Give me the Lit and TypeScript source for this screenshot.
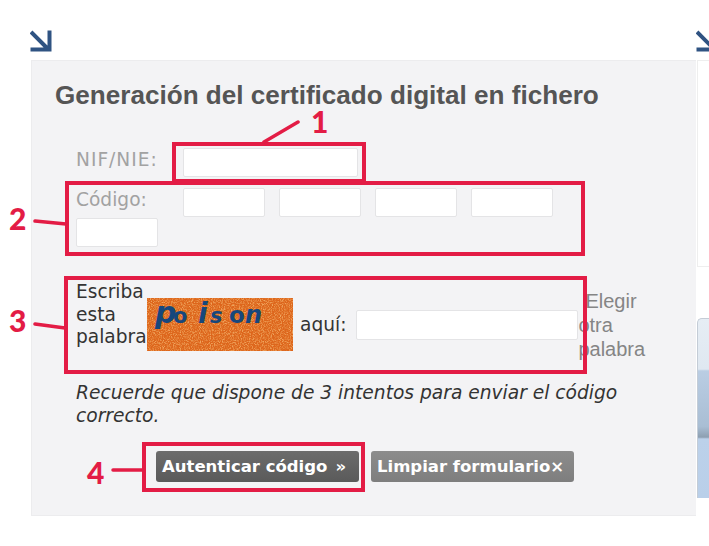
import { LitElement, html, css, svg } from "lit";
import { customElement } from "lit/decorators.js";

const arrow = html`<svg class="arrow" width="22" height="22" viewBox="0 0 22 22"><path d="M1 2 L19 20 M0.5 19.5 H19.5 V0.5" fill="none" stroke="#2f5382" stroke-width="4"/></svg>`;

@customElement("app-root")
export class AppRoot extends LitElement {
  static styles = css`
    :host { display: block; width: 709px; height: 546px; overflow: hidden; position: relative; background: #fff; font-family: "DejaVu Sans", Verdana, sans-serif; }
    .page { display: flex; padding: 30px 0 0 30px; }
    .col { flex: 0 0 666px; }
    .arrow { display: block; margin-bottom: 8px; }
    .panel { margin-left: 1px; width: 665px; height: 456px; box-sizing: border-box; background: #f3f3f5; padding: 20px 0 0 23px; border-top: 1px solid #ececee; border-bottom: 1px solid #ececee; border-left: 1px solid #ececee; }
    h2 { margin: 0 0 39px; font: bold 26.1px/28px "Liberation Sans", Arial, sans-serif; color: #555; white-space: nowrap; }
    .form { margin-left: 21px; }
    .row { display: flex; align-items: flex-start; }
    .lbl { flex: 0 0 107px; font-size: 18.6px; line-height: 24px; color: #a2a2a2; }
    .wide { letter-spacing: 1px; }
    input { box-sizing: border-box; height: 29px; background: #fff; border: 1px solid #e4e4e6; border-radius: 2px; padding: 0; margin: 0; display: block; }
    .nif { width: 175px; }
    .code { flex-wrap: wrap; width: 500px; margin-top: 11px; row-gap: 1px; }
    .code input { width: 82px; margin-right: 14px; }
    .cap { margin-top: 35px; color: #333; }
    .write { flex: 0 0 71px; font-size: 18.6px; line-height: 22.5px; margin-top: -1px; }
    .capimg { display: block; flex: none; margin-top: 16px; }
    .aqui { font-size: 18.6px; line-height: 24px; margin: 31px 10px 0 7px; }
    .word { flex: none; width: 222px; height: 30px; margin-top: 28px; }
    .other { flex: 0 0 72px; font: 20px/24px "Liberation Sans", Arial, sans-serif; color: #858585; margin-top: 7px; text-indent: 7px; }
    .note { margin: 20px 0 0; font-size: 18.65px; line-height: 23px; font-style: italic; color: #333; width: 570px; }
    .btns { display: flex; gap: 12px; margin: 24px 0 0 80px; }
    button { width: 203px; height: 31px; border: 0; padding: 0 0 0 6px; text-align: left; border-radius: 3px; color: #fff; font: bold 16.5px "DejaVu Sans", Verdana, sans-serif; white-space: nowrap; overflow: hidden; }
    .mark { margin-left: 8px; }
    .go { background: linear-gradient(#6c6c6c, #5a5a5a); }
    .clear { background: linear-gradient(#8c8c8c, #7e7e7e); }
    .side { margin-left: 1px; height: 456px; box-sizing: border-box; background: #fff; border-top: 1px solid #eee; }
    .sideTop { height: 205px; border-left: 1px solid #eee; border-bottom: 1px solid #eee; }
    .photo { margin-top: 51px; height: 180px; box-sizing: border-box; border-left: 1px solid #c4ccd6; border-top: 1px solid #c4ccd6; border-top-left-radius: 5px; background: linear-gradient(#e6edf4 0, #dfe8f1 28%, #bacde3 29%, #a9bed4 60%, #8d9fb1 66%, #bcd1ea 67%, #b9cfe9 100%); }
    .marks { position: absolute; inset: 0; pointer-events: none; }
    .marks text { font: 900 30px Lato, sans-serif; fill: #e31c45; }
  `;

  private captcha() {
    return html`<svg class="capimg" width="146" height="53" viewBox="0 0 146 53">
      <defs><filter id="n" x="0" y="0" width="100%" height="100%">
        <feTurbulence type="fractalNoise" baseFrequency="0.9" numOctaves="2" seed="4" result="t"/>
        <feColorMatrix in="t" type="matrix" values="0 0 0 0 0.98  0 0 0 0 0.62  0 0 0 0 0.25  3 0 0 0 -1.3"/>
      </filter></defs>
      <rect width="146" height="53" fill="#dd661c"/>
      <rect width="146" height="53" filter="url(#n)" opacity=".6"/>
      <g fill="#17477c" font-family="'DejaVu Sans',sans-serif" font-weight="bold">
        <text x="8" y="25" font-size="30" font-style="italic">p</text>
        <text x="26" y="25" font-size="21">o</text>
        <text x="51" y="25" font-size="28" font-style="italic">i</text>
        <text x="63" y="25" font-size="21" font-style="italic">s</text>
        <text x="82" y="25" font-size="23">o</text>
        <text x="98" y="25" font-size="24" font-style="italic">n</text>
      </g>
    </svg>`;
  }

  render() {
    return html`
      <div class="page">
        <div class="col">
          ${arrow}
          <section class="panel">
            <h2>Generación del certificado digital en fichero</h2>
            <div class="form">
              <div class="row"><span class="lbl wide">NIF/NIE:</span><input class="nif" /></div>
              <div class="row code">
                <span class="lbl">Código:</span>
                <input /><input /><input /><input /><input />
              </div>
              <div class="row cap">
                <div class="write">Escriba esta palabra</div>
                ${this.captcha()}
                <span class="aqui">aquí:</span>
                <input class="word" />
                <span class="other">Elegir otra palabra</span>
              </div>
              <p class="note">Recuerde que dispone de 3 intentos para enviar el código correcto.</p>
              <div class="btns">
                <button class="go">Autenticar código<span class="mark">»</span></button>
                <button class="clear">Limpiar formulario×</button>
              </div>
            </div>
          </section>
        </div>
        <div class="col">
          ${arrow}
          <div class="side"><div class="sideTop"></div><div class="photo"></div></div>
        </div>
      </div>
      <svg class="marks" width="709" height="546" viewBox="0 0 709 546">
        ${svg`<g fill="none" stroke="#e31c45" stroke-width="4">
          <rect x="174" y="144" width="190" height="37"/>
          <rect x="67" y="183" width="516" height="71"/>
          <rect x="66" y="278" width="519" height="94"/>
          <rect x="144" y="444" width="219" height="46"/>
          <path stroke-width="3.5" stroke-linecap="round" d="M264 142 L298 122 M35 221 L66 224 M35 324 L65 328 M113 470 H142"/>
        </g>
        <text x="311" y="133">1</text>
        <text x="9" y="230">2</text>
        <text x="9" y="332">3</text>
        <text x="87" y="484">4</text>`}
      </svg>
    `;
  }
}
